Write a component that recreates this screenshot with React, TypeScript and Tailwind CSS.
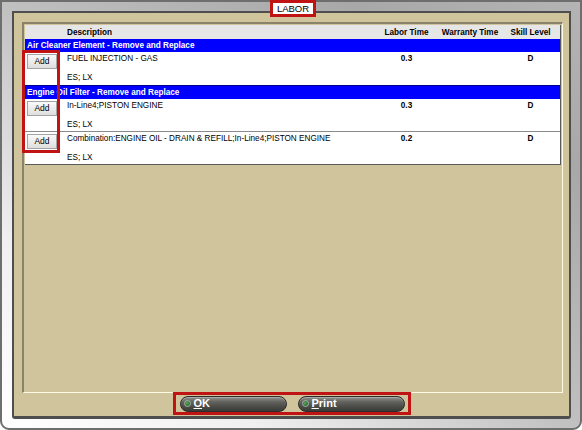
import { type ReactNode } from "react";

type LaborItem = {
  desc: string;
  note: string;
  time: string;
  warranty: string;
  skill: string;
};

type LaborGroup = {
  title: string;
  items: LaborItem[];
};

const groups: LaborGroup[] = [
  {
    title: "Air Cleaner Element - Remove and Replace",
    items: [
      { desc: "FUEL INJECTION - GAS", note: "ES; LX", time: "0.3", warranty: "", skill: "D" },
    ],
  },
  {
    title: "Engine Oil Filter - Remove and Replace",
    items: [
      { desc: "In-Line4;PISTON ENGINE", note: "ES; LX", time: "0.3", warranty: "", skill: "D" },
      {
        desc: "Combination:ENGINE OIL - DRAIN & REFILL;In-Line4;PISTON ENGINE",
        note: "ES; LX",
        time: "0.2",
        warranty: "",
        skill: "D",
      },
    ],
  },
];

const FrameButton = ({ label }: { label: string }) => (
  <button
    type="button"
    className="flex h-[16px] w-[107px] items-center gap-[3px] rounded-full border border-[#2c2c2a] bg-[linear-gradient(to_bottom,#92928e_0%,#62625f_35%,#4a4a47_70%,#3a3a37_100%)] pl-[3px] text-[11px] font-bold leading-none text-white shadow-[inset_0_1px_0_rgba(255,255,255,0.25)]"
  >
    <span className="h-[7px] w-[7px] rounded-full border border-[#a4b4a4] bg-[radial-gradient(circle_at_40%_40%,#5aa85a,#1a501a)]" />
    <span>
      <span className="underline">{label[0]}</span>
      {label.slice(1)}
    </span>
  </button>
);

const Cell = ({ className, children }: { className: string; children?: ReactNode }) => (
  <div className={className}>{children}</div>
);

export default function App() {
  return (
    <div className="relative h-[430px] w-[582px] font-['Liberation_Sans',Arial,sans-serif] text-black">
      <div className="flex h-full w-full flex-col rounded-b-[9px] border-2 border-[#6e6e6e] bg-[linear-gradient(to_top_right,#ffffff_0%,#f0f0f0_22%,#c0c0c0_50%,#a8a8a8_80%,#b4b4b4_100%)] pb-[9px] pl-[10px] pr-[9px] pt-[9px]">
        <div className="flex flex-1 flex-col rounded-b-[3px] border-2 border-b-[3px] border-[#4e4e4e] bg-[#cfc49b]">
          <div className="ml-[8px] mr-[6px] mt-[9px] h-[371px] border-b border-l-2 border-r border-t-2 border-b-[#fffbe4] border-l-[#8a826a] border-r-[#fffbe4] border-t-[#8a826a] pl-px pr-px pt-px">
            <div className="border-b border-r border-[#5a5a5a] bg-white text-[8.2px] leading-[11px]">
              <div className="flex h-[14px] items-center bg-[#e6e6e6] font-bold">
                <Cell className="w-[40px]" />
                <Cell className="w-[313px] pl-[2px]">Description</Cell>
                <Cell className="w-[57px] text-center">Labor Time</Cell>
                <Cell className="w-[70px] text-center">Warranty Time</Cell>
                <Cell className="w-[51px] text-center">Skill Level</Cell>
              </div>
              {groups.map((group, gi) => (
                <div key={group.title}>
                  <div
                    className={`flex items-center bg-[#0000ff] pl-[2px] font-bold text-white ${
                      gi === 0 ? "h-[13px]" : "h-[14px] border-t border-[#00008a]"
                    }`}
                  >
                    {group.title}
                  </div>
                  {group.items.map((item, ii) => {
                    const last = ii === group.items.length - 1;
                    return (
                      <div
                        key={item.desc}
                        className={`flex ${
                          gi === 0 ? "h-[33px]" : last ? "h-[32px]" : "h-[33px] border-b border-[#8a8a8a]"
                        }`}
                      >
                        <Cell className="w-[40px] pl-[2px] pt-[2px]">
                          <button
                            type="button"
                            className="flex h-[15px] w-[30px] items-center justify-center border border-[#a4a4a4] bg-[linear-gradient(to_bottom,#fafafa,#dedede)] text-[8.5px] leading-none"
                          >
                            Add
                          </button>
                        </Cell>
                        <Cell className="w-[313px] pl-[2px] pt-px">
                          <div>{item.desc}</div>
                          <div className="mt-[8px]">{item.note}</div>
                        </Cell>
                        <Cell className="w-[57px] pt-px text-center font-bold">{item.time}</Cell>
                        <Cell className="w-[70px] pt-px text-center font-bold">{item.warranty}</Cell>
                        <Cell className="w-[51px] pt-px text-center font-bold">{item.skill}</Cell>
                      </div>
                    );
                  })}
                </div>
              ))}
            </div>
          </div>
          <div className="-mt-[1px] flex h-[23px] w-[238px] items-center gap-[11px] self-center border-[3px] border-[#c01414] pl-[4px]">
            <FrameButton label="OK" />
            <FrameButton label="Print" />
          </div>
        </div>
      </div>

      <div className="absolute left-[270px] top-0 flex h-[17px] w-[46px] items-center justify-center border-[3px] border-[#c01414] bg-white text-[9.5px] leading-none">
        LABOR
      </div>
      <div className="absolute left-[22px] top-[50px] h-[103px] w-[38px] border-[3px] border-[#c01414]" />
    </div>
  );
}
